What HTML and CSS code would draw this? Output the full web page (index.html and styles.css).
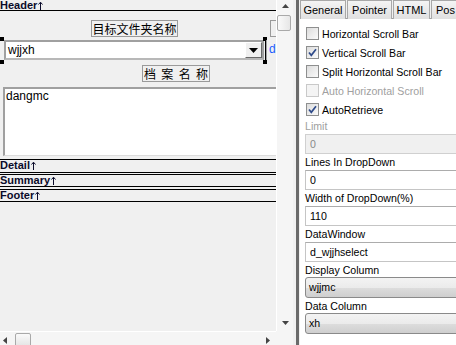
FILE: index.html
```html
<!DOCTYPE html>
<html>
<head>
<meta charset="utf-8">
<link rel="stylesheet" href="styles.css">
</head>
<body>
<div class="app">
  <div class="designer">
    <div class="canvas">
      <div class="bar bar-header"><span>Header</span><svg class="up" width="5" height="9" viewBox="0 0 5 9"><path d="M2.5 1.5V9M0.5 3.5L2.5 1.2L4.5 3.5" fill="none" stroke="currentColor" stroke-width="1"/></svg></div>
      <div class="band">
        <div class="obj txt label-folder">目标文件夹名称</div>
        <div class="obj txt label-cut"></div>
        <div class="obj ddlb"><span class="ddlb-text">wjjxh</span><span class="ddlb-btn"><svg width="9" height="5" viewBox="0 0 9 5"><path d="M0 0H9L4.5 5Z" fill="#000"/></svg></span></div>
        <span class="obj handle h-tl"></span>
        <span class="obj handle h-bl"></span>
        <span class="obj handle h-tr"></span>
        <span class="obj handle h-br"></span>
        <span class="obj sel-line"></span>
        <div class="obj col-d">d</div>
        <div class="obj txt label-name">档 案 名 称</div>
        <div class="obj mle">dangmc</div>
      </div>
      <div class="bar bar-detail"><span>Detail</span><svg class="up" width="5" height="9" viewBox="0 0 5 9"><path d="M2.5 1.5V9M0.5 3.5L2.5 1.2L4.5 3.5" fill="none" stroke="currentColor" stroke-width="1"/></svg></div>
      <div class="gap gap-1"></div>
      <div class="bar"><span>Summary</span><svg class="up" width="5" height="9" viewBox="0 0 5 9"><path d="M2.5 1.5V9M0.5 3.5L2.5 1.2L4.5 3.5" fill="none" stroke="currentColor" stroke-width="1"/></svg></div>
      <div class="gap gap-2"></div>
      <div class="bar"><span>Footer</span><svg class="up" width="5" height="9" viewBox="0 0 5 9"><path d="M2.5 1.5V9M0.5 3.5L2.5 1.2L4.5 3.5" fill="none" stroke="currentColor" stroke-width="1"/></svg></div>
    </div>
    <div class="vscroll">
      <span class="sbtn"><svg width="7" height="4" viewBox="0 0 7 4"><path d="M0 4H7L3.5 0Z" fill="#444"/></svg></span>
      <span class="vthumb"></span>
      <span class="sfill"></span>
      <span class="sbtn"><svg width="7" height="4" viewBox="0 0 7 4"><path d="M0 0H7L3.5 4Z" fill="#444"/></svg></span>
    </div>
    <div class="hscroll">
      <div class="htrack">
        <span class="hbtn"><svg width="4" height="7" viewBox="0 0 4 7"><path d="M4 0V7L0 3.5Z" fill="#444"/></svg></span>
        <span class="hthumb"></span>
        <span class="sfill"></span>
        <span class="hbtn"><svg width="4" height="7" viewBox="0 0 4 7"><path d="M0 0V7L4 3.5Z" fill="#444"/></svg></span>
      </div>
    </div>
    <div class="corner"></div>
  </div>
  <div class="splitter"></div>
  <div class="props">
    <div class="tabs">
      <span class="tab tab-general">General</span>
      <span class="tab tab-pointer">Pointer</span>
      <span class="tab tab-html">HTML</span>
      <span class="tab tab-pos">Pos</span>
    </div>
    <div class="prop-body">
      <div class="chk-row"><span class="chk"></span><span>Horizontal Scroll Bar</span></div>
      <div class="chk-row"><span class="chk"><svg width="11" height="11" viewBox="0 0 11 11"><path d="M2 5.5L4.3 8.3L9 2.2" fill="none" stroke="#2f4b8a" stroke-width="1.7"/></svg></span><span>Vertical Scroll Bar</span></div>
      <div class="chk-row"><span class="chk"></span><span>Split Horizontal Scroll Bar</span></div>
      <div class="chk-row disabled"><span class="chk"></span><span>Auto Horizontal Scroll</span></div>
      <div class="chk-row"><span class="chk"><svg width="11" height="11" viewBox="0 0 11 11"><path d="M2 5.5L4.3 8.3L9 2.2" fill="none" stroke="#2f4b8a" stroke-width="1.7"/></svg></span><span>AutoRetrieve</span></div>

      <div class="field disabled"><div class="flabel">Limit</div><div class="input">0</div></div>
      <div class="field"><div class="flabel">Lines In DropDown</div><div class="input">0</div></div>
      <div class="field"><div class="flabel">Width of DropDown(%)</div><div class="input">110</div></div>
      <div class="field"><div class="flabel">DataWindow</div><div class="input">d_wjjhselect</div></div>
      <div class="field combo-field"><div class="flabel">Display Column</div><div class="combo">wjjmc</div></div>
      <div class="field combo-field"><div class="flabel">Data Column</div><div class="combo">xh</div></div>
    </div>
  </div>
</div>
</body>
</html>
```

FILE: styles.css
```css
* { box-sizing: border-box; }
html, body { margin: 0; padding: 0; }
body {
  width: 456px;
  height: 345px;
  overflow: hidden;
  background: #f0f0f0;
  font-family: "Liberation Sans", Arial, sans-serif;
}
.app {
  display: flex;
  width: 456px;
  height: 345px;
  overflow: hidden;
}

/* ---------- designer (left) ---------- */
.designer {
  flex: none;
  width: 293px;
  height: 351px;
  margin-top: -3px;
  display: grid;
  grid-template-columns: 276px 17px;
  grid-template-rows: 334px 17px;
  background: #f0f0f0;
}
.canvas {
  position: relative;
  overflow: hidden;
  background: #f0f0f0;
}
.bar {
  height: 13px;
  border-top: 1px solid #000;
  border-bottom: 1px solid #000;
  display: flex;
  align-items: flex-start;
  gap: 1px;
  font: bold 11px/11px "Liberation Sans", Arial, sans-serif;
  color: #0b0b2a;
  white-space: nowrap;
}
.bar-header { height: 12px; margin-top: 2px; }
.bar-detail { height: 14px; }
.bar .up { flex: none; margin-top: 1px; }
.gap-1 { height: 1px; }
.gap-2 { height: 2px; }
.band {
  position: relative;
  height: 148px;
}
.obj { position: absolute; }
.txt {
  border: 1px solid #9a9a9a;
  background: #f0f0f0;
  font: 12px/15px "Noto Sans CJK SC", sans-serif;
  color: #000;
  text-align: center;
  white-space: nowrap;
}
.label-folder { left: 91px; top: 9px; width: 87px; height: 17px; }
.label-cut { left: 270px; top: 9px; width: 14px; height: 17px; border-right: 1px dotted #555; }
.label-name {
  left: 142px; top: 54px; width: 68px; height: 17px;
  padding: 0 1px;
  text-align: justify;
  text-align-last: justify;
}
.ddlb {
  left: 4px; top: 29px; width: 260px; height: 20px;
  border: 2px solid #a0a0a0;
  border-bottom-color: #b8b8b8;
  background: #fff;
  display: flex;
  align-items: center;
  justify-content: space-between;
  padding-left: 2px;
}
.ddlb-text { font: 12px/14px "Liberation Sans", Arial, sans-serif; color: #000; }
.ddlb-btn {
  width: 17px; height: 16px;
  display: flex; align-items: center; justify-content: center;
  background: #f0f0f0;
  border-top: 1px solid #fff;
  border-left: 1px solid #fff;
  border-right: 1px solid #696969;
  border-bottom: 1px solid #696969;
}
.handle { width: 4px; height: 4px; background: #000; }
.h-tl { left: 0; top: 26px; }
.h-bl { left: 0; top: 49px; }
.h-tr { left: 263px; top: 26px; }
.h-br { left: 263px; top: 49px; }
.sel-line { left: 265px; top: 27px; width: 1px; height: 24px; background: #000; }
.col-d {
  left: 266px; top: 29px; width: 20px; height: 20px;
  border-left: 1px solid #a0a0a0;
  padding-left: 2px;
  font: 12px/19px "Liberation Sans", Arial, sans-serif;
  color: #1a5cff;
}
.mle {
  left: 3px; top: 76px; width: 273px; height: 69px;
  border-top: 2px solid #a0a0a0;
  border-left: 2px solid #a0a0a0;
  border-bottom: 1px solid #dcdcdc;
  background: #fff;
  padding: 0 0 0 1px;
  font: 12px/14px "Liberation Sans", Arial, sans-serif;
  color: #000;
}

/* scrollbars */
.vscroll {
  display: flex;
  flex-direction: column;
  background: #f5f5f5;
  border-left: 1px solid #fff;
}
.sbtn {
  flex: none;
  height: 17px;
  display: flex; align-items: center; justify-content: center;
}
.sfill { flex: 1; }
.vthumb {
  flex: none;
  height: 16px;
  margin: 1px 2px 0 0;
  border: 1px solid #a9a9a9;
  border-radius: 2px;
  background: linear-gradient(to right, #fafafa, #e6e6e6);
}
.hscroll {
  overflow: hidden;
  background: #f5f5f5;
  border-top: 1px solid #fff;
}
.htrack {
  display: flex;
  height: 16px;
  margin-left: -4px;
}
.hbtn {
  flex: none;
  width: 17px;
  display: flex; align-items: center; justify-content: center;
}
.hthumb {
  flex: none;
  width: 16px;
  margin: 1px 0 0 2px;
  border: 1px solid #a9a9a9;
  border-radius: 2px;
  background: linear-gradient(#fafafa, #e2e2e2);
}
.corner { background: #f5f5f5; }

.splitter {
  flex: none;
  width: 7px;
  border-left: 3px solid #f0f0f0;
  border-right: 1px solid #f0f0f0;
  background: #6a6a6a;
}

/* ---------- properties (right) ---------- */
.props {
  flex: none;
  width: 156px;
  background: #fff;
  font-family: "Liberation Sans", Arial, sans-serif;
  font-size: 10.6px;
  color: #000;
  overflow: hidden;
}
.tabs {
  display: flex;
  height: 19px;
  border-bottom: 1px solid #a0a0a0;
  background: #f0f0f0;
  white-space: nowrap;
}
.tab {
  flex: none;
  height: 19px;
  display: flex; align-items: center; justify-content: center;
  border: 1px solid #a8a8a8;
  border-bottom: none;
  margin-right: 1px;
  background: linear-gradient(#f4f4f4, #e0e0e0);
  font-size: 11px;
}
.tab-general { width: 46px; }
.tab-pointer { width: 45px; }
.tab-html { width: 37px; }
.tab-pos { width: 40px; justify-content: flex-start; padding-left: 4px; }

.prop-body { padding: 5px 0 0 5px; }
.chk-row {
  height: 19px;
  display: flex;
  align-items: center;
  gap: 3px;
  white-space: nowrap;
}
.chk {
  flex: none;
  width: 13px; height: 13px;
  border: 1px solid #8e8f8f;
  background: linear-gradient(135deg, #dcdcdc, #fbfbfb);
  display: flex; align-items: center; justify-content: center;
  margin-left: 1px;
}
.chk-row.disabled { color: #a0a0a0; }
.chk-row.disabled .chk { border-color: #c9c9c9; background: #f4f4f4; }

.field { margin-bottom: 1px; }
.flabel {
  height: 15px;
  line-height: 15px;
  white-space: nowrap;
}
.field.disabled .flabel { color: #a0a0a0; }
.input {
  height: 20px;
  width: 170px;
  border: 1px solid #c5c5c5;
  border-top-color: #acacac;
  padding-left: 4px;
  line-height: 18px;
  background: #fff;
}
.field.disabled .input { background: #f0f0f0; color: #8a8a8a; border-color: #d0d0d0; }
.combo-field .flabel { height: 14px; line-height: 14px; }
.combo {
  height: 21px;
  width: 170px;
  border: 1px solid #8a8a8a;
  border-radius: 3px;
  background: linear-gradient(#f3f3f3 0%, #ebebeb 50%, #dddddd 51%, #cfcfcf 100%);
  padding-left: 3px;
  line-height: 19px;
}
```
